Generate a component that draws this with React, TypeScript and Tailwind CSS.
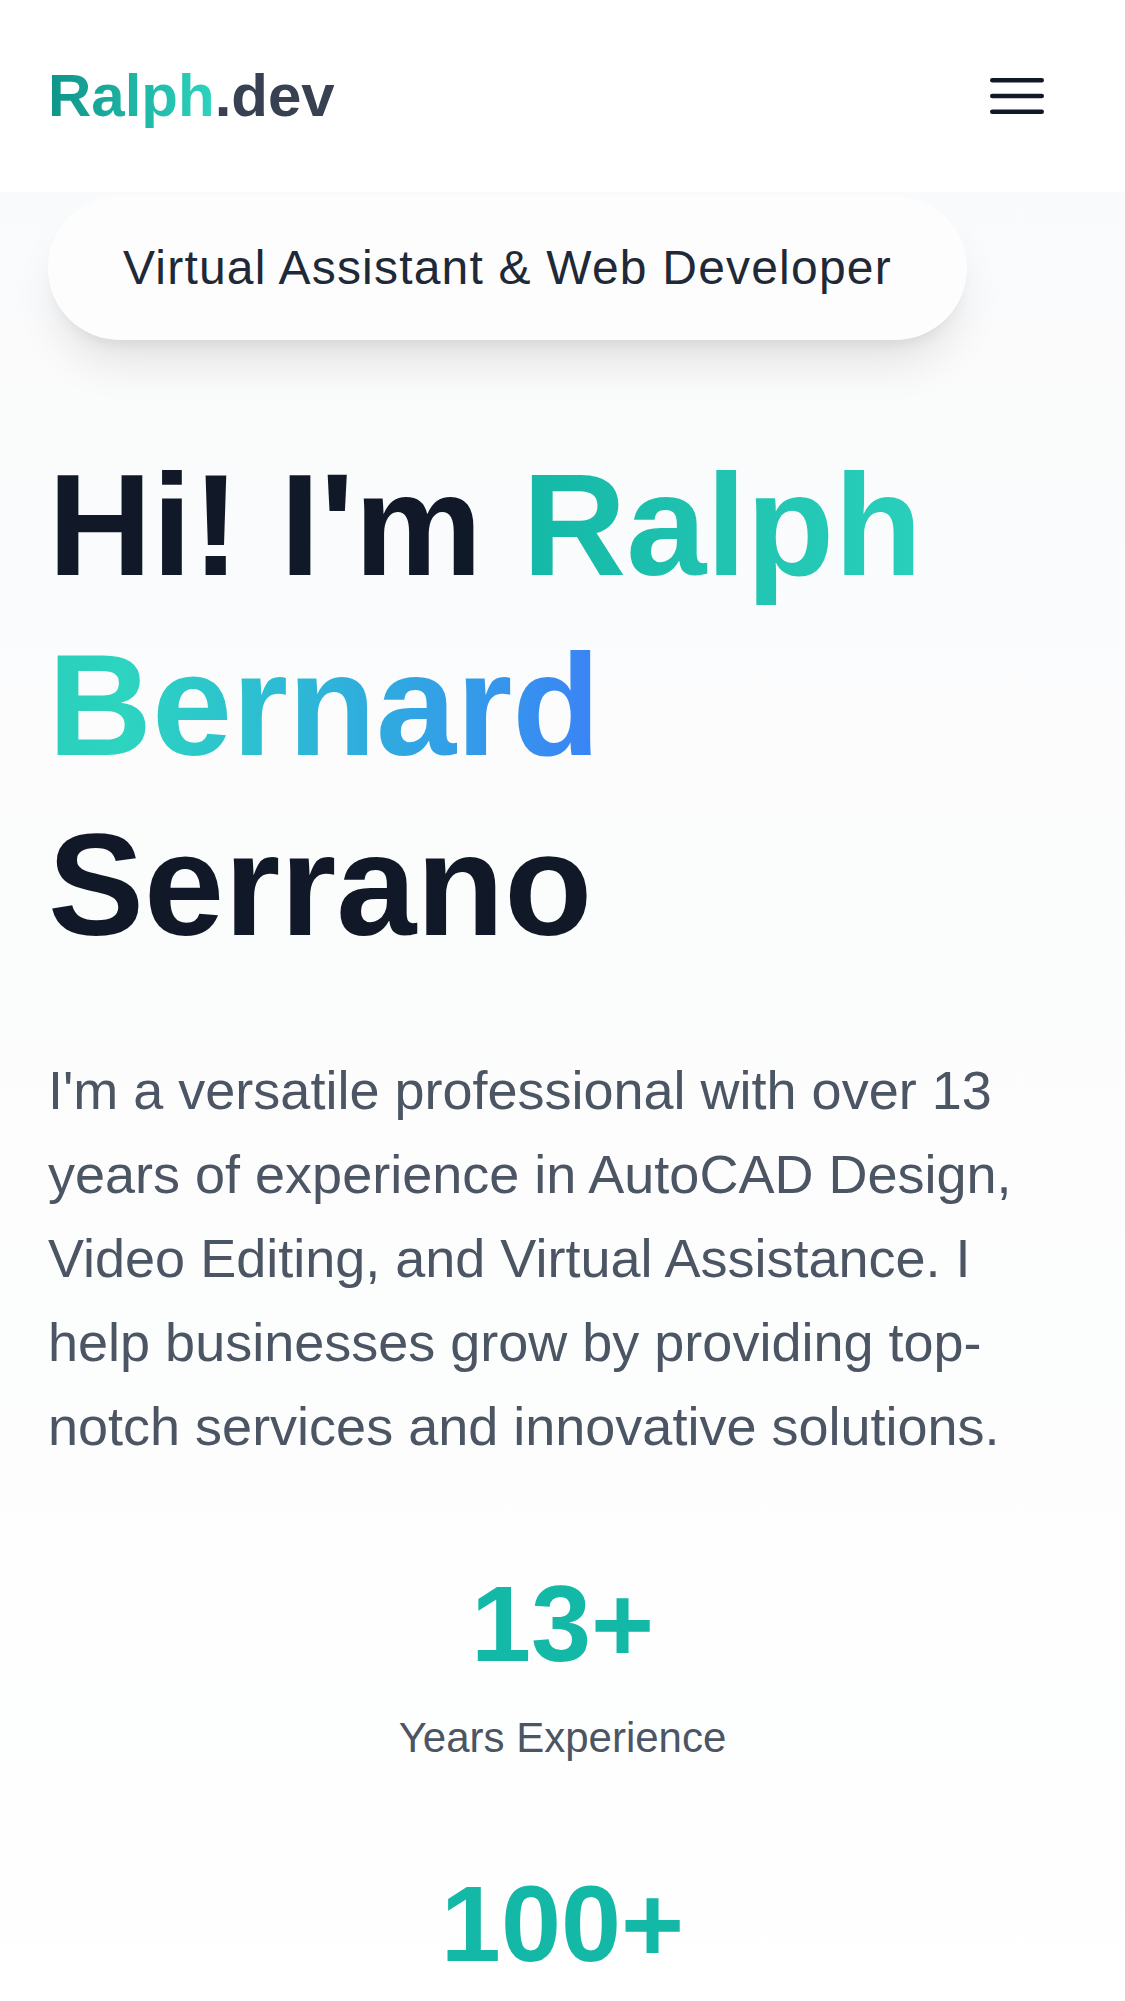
import React from "react";

const stats = [
  { value: "13+", label: "Years Experience" },
  { value: "100+", label: "Projects Completed" },
];

function MenuIcon() {
  return (
    <svg
      width={72}
      height={72}
      viewBox="0 0 24 24"
      fill="none"
      stroke="currentColor"
      strokeWidth={1.5}
      strokeLinecap="round"
    >
      <path d="M3.75 6.75h16.5M3.75 12h16.5M3.75 17.25h16.5" />
    </svg>
  );
}

function Header() {
  return (
    <header className="h-[192px] px-[48px] flex items-center justify-between bg-white">
      <a href="#" className="text-[60px] leading-[84px] font-bold">
        <span className="bg-linear-to-r from-[#0d9488] to-[#2dd4bf] bg-clip-text text-transparent">
          Ralph
        </span>
        <span className="text-[#374151]">.dev</span>
      </a>
      <button className="p-[24px] text-[#111827]">
        <MenuIcon />
      </button>
    </header>
  );
}

function Hero() {
  return (
    <section className="px-[48px] pt-[4px] pb-[96px]">
      <div className="inline-block rounded-full bg-white/60 px-[75px] py-[36px] text-[48px] leading-[72px] tracking-wide text-[#1f2937] shadow-[0_30px_45px_-9px_rgba(0,0,0,0.1),0_12px_18px_-12px_rgba(0,0,0,0.1)]">
        Virtual Assistant &amp; Web Developer
      </div>

      <h1 className="mt-[96px] text-[144px] leading-[180px] font-bold text-[#111827]">
        Hi! I'm{" "}
        <span className="bg-linear-to-r from-[#14b8a6] via-[#2dd4bf] to-[#3b82f6] bg-clip-text text-transparent">
          Ralph Bernard
        </span>{" "}
        Serrano
      </h1>

      <p className="mt-[72px] text-[54px] leading-[84px] text-[#4b5563]">
        I'm a versatile professional with over 13 years of experience in
        AutoCAD Design, Video Editing, and Virtual Assistance. I help businesses
        grow by providing top-notch services and innovative solutions.
      </p>

      <div className="mt-[96px] flex flex-col gap-[96px] text-center">
        {stats.map((s) => (
          <div key={s.label}>
            <div className="text-[108px] leading-[120px] font-bold text-[#14b8a6]">
              {s.value}
            </div>
            <div className="mt-[24px] text-[42px] leading-[60px] text-[#4b5563]">
              {s.label}
            </div>
          </div>
        ))}
      </div>
    </section>
  );
}

export default function App() {
  return (
    <div className="min-h-screen bg-linear-to-b from-[#f9fafb] to-white font-['Liberation_Sans',Arial,sans-serif]">
      <Header />
      <Hero />
    </div>
  );
}
